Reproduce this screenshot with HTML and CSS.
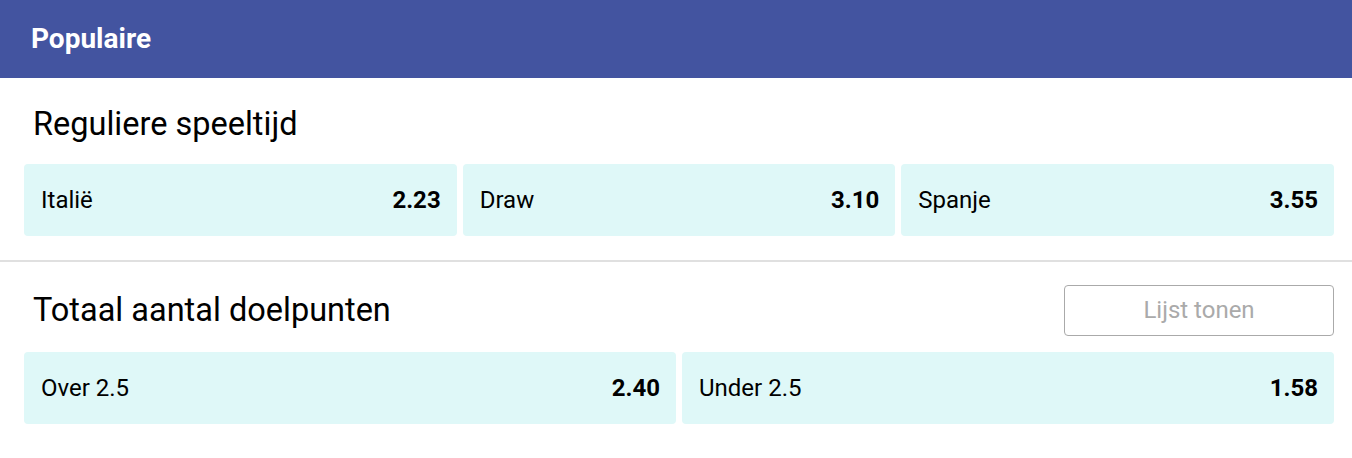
FILE: index.html
```html
<!DOCTYPE html>
<html lang="nl">
<head>
<meta charset="utf-8">
<title>Populaire</title>
<link rel="stylesheet" href="styles.css">
</head>
<body>
<header class="topbar">Populaire</header>
<section class="market market--first">
  <div class="market-head">
    <h2 class="market-title">Reguliere speeltijd</h2>
  </div>
  <div class="odds odds--three">
    <div class="odd"><span class="odd-label">Italië</span><span class="odd-value">2.23</span></div>
    <div class="odd"><span class="odd-label">Draw</span><span class="odd-value">3.10</span></div>
    <div class="odd"><span class="odd-label">Spanje</span><span class="odd-value">3.55</span></div>
  </div>
</section>
<section class="market market--next">
  <div class="market-head">
    <h2 class="market-title">Totaal aantal doelpunten</h2>
    <button class="list-btn" type="button">Lijst tonen</button>
  </div>
  <div class="odds odds--two">
    <div class="odd"><span class="odd-label">Over 2.5</span><span class="odd-value">2.40</span></div>
    <div class="odd"><span class="odd-label">Under 2.5</span><span class="odd-value">1.58</span></div>
  </div>
</section>
</body>
</html>
```
FILE: styles.css
```css
* { box-sizing: border-box; }
html, body { margin: 0; padding: 0; background: #fff; }
body { font-family: Roboto, "Noto Sans", sans-serif; color: #000; }

.topbar {
  height: 78px;
  line-height: 78px;
  background: #4354a0;
  color: #fff;
  font-size: 28px;
  font-weight: 700;
  padding-left: 31px;
}

.market { padding: 20px 18px 24px 24px; }
.market--first { border-bottom: 2px solid #e0e0e0; }
.market--next { padding-top: 22px; }

.market-head {
  display: flex;
  align-items: center;
  justify-content: space-between;
  margin-bottom: 14px;
}
.market--next .market-head { margin-bottom: 16px; }

.market-title {
  margin: 0;
  padding-left: 9px;
  font-size: 32.5px;
  font-weight: 400;
  line-height: 52px;
}

.list-btn {
  width: 270px;
  height: 51px;
  border: 1px solid #aaa;
  border-radius: 4px;
  background: #fff;
  color: #aaa;
  font-family: Roboto, "Noto Sans", sans-serif;
  font-size: 24px;
  padding: 0;
}

.odds { display: grid; gap: 6px; }
.odds--three { grid-template-columns: repeat(3, 1fr); }
.odds--two { grid-template-columns: repeat(2, 1fr); }

.odd {
  height: 72px;
  background: #dff8f8;
  border-radius: 4px;
  display: flex;
  align-items: center;
  justify-content: space-between;
  padding: 0 16px 0 17px;
  font-size: 24px;
}
.odd-value { font-weight: 700; }
```
